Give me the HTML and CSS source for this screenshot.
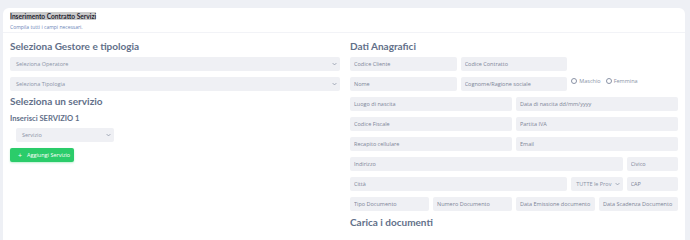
FILE: index.html
```html
<!DOCTYPE html>
<html lang="it">
<head>
<meta charset="utf-8">
<title>Inserimento Contratto Servizi</title>
<link rel="stylesheet" href="styles.css">
</head>
<body>
<div class="card">
  <div class="card-header">
    <div class="title"><span class="title-sel">Inserimento Contratto Servizi</span></div>
    <div class="subtitle">Compila tutti i campi necessari.</div>
  </div>
  <div class="card-body">
    <div class="col-left">
      <h2 class="section">Seleziona Gestore e tipologia</h2>
      <div class="select wide first"><span>Seleziona Operatore</span><svg class="chev" viewBox="0 0 8 5" width="5" height="4"><path d="M1 1l3 3 3-3" fill="none" stroke="#8a93a6" stroke-width="1.2"/></svg></div>
      <div class="select wide"><span>Seleziona Tipologia</span><svg class="chev" viewBox="0 0 8 5" width="5" height="4"><path d="M1 1l3 3 3-3" fill="none" stroke="#8a93a6" stroke-width="1.2"/></svg></div>
      <h2 class="section s2">Seleziona un servizio</h2>
      <h3 class="sub">Inserisci SERVIZIO 1</h3>
      <div class="select small"><span>Servizio</span><svg class="chev" viewBox="0 0 8 5" width="5" height="4"><path d="M1 1l3 3 3-3" fill="none" stroke="#8a93a6" stroke-width="1.2"/></svg></div>
      <button class="btn-add"><span class="plus">+</span>Aggiungi Servizio</button>
    </div>
    <div class="col-right">
      <h2 class="section">Dati Anagrafici</h2>
      <div class="form-grid">
        <input class="c4" placeholder="Codice Cliente">
        <input class="c4" placeholder="Codice Contratto">
        <div class="c4"></div>
        <input class="c4" placeholder="Nome">
        <input class="c4" placeholder="Cognome/Ragione sociale">
        <div class="c4 radios">
          <label class="radio"><span class="dot"></span>Maschio</label>
          <label class="radio"><span class="dot"></span>Femmina</label>
        </div>
        <input class="c6" placeholder="Luogo di nascita">
        <input class="c6" placeholder="Data di nascita dd/mm/yyyy">
        <input class="c6" placeholder="Codice Fiscale">
        <input class="c6" placeholder="Partita IVA">
        <input class="c6" placeholder="Recapito cellulare">
        <input class="c6" placeholder="Email">
        <input class="c10" placeholder="Indirizzo">
        <input class="c2" placeholder="Civico">
        <input class="c8" placeholder="Città">
        <div class="c2 select prov"><span>TUTTE le Prov</span><svg class="chev" viewBox="0 0 8 5" width="5" height="4"><path d="M1 1l3 3 3-3" fill="none" stroke="#8a93a6" stroke-width="1.2"/></svg></div>
        <input class="c2" placeholder="CAP">
        <input class="c3" placeholder="Tipo Documento">
        <input class="c3" placeholder="Numero Documento">
        <input class="c3" placeholder="Data Emissione documento">
        <input class="c3" placeholder="Data Scadenza Documento">
      </div>
      <h2 class="section s3">Carica i documenti</h2>
    </div>
  </div>
</div>
</body>
</html>
```

FILE: styles.css
```css
html, body {
  margin: 0;
  padding: 0;
  height: 100%;
  overflow: hidden;
}
body {
  background: #eef0f5;
  font-family: "Open Sans", "Noto Sans", sans-serif;
}
.card {
  margin: 8px 5px 0 3px;
  background: #ffffff;
  border-radius: 6px 6px 0 0;
  height: calc(100vh - 8px);
}
.card-header {
  height: 25px;
  padding: 4px 7px 0;
  box-sizing: border-box;
  border-bottom: 1px solid #f2f3f7;
}
.title {
  font-family: "Lato", sans-serif;
  font-size: 6.6px;
  line-height: 9px;
  font-weight: 700;
  color: #1f2430;
}
.title-sel {
  background: #c9c9c9;
}
.subtitle {
  font-size: 5px;
  line-height: 7px;
  margin-top: 3px;
  color: #6b86b8;
}
.card-body {
  display: grid;
  grid-template-columns: 330px 328px;
  column-gap: 10px;
  padding: 0 7px;
}
.section {
  margin: 6.5px 0 4.5px;
  font-family: "Lato", sans-serif;
  font-size: 10px;
  line-height: 13px;
  font-weight: 700;
  color: #627089;
}
.section.s2 { margin-top: 3.5px; margin-bottom: 5px; }
.section.s3 { margin-top: 4.8px; }
.sub {
  margin: 0 0 5.8px;
  font-family: "Lato", sans-serif;
  font-size: 7.6px;
  line-height: 10px;
  font-weight: 700;
  color: #627089;
}
.select {
  display: flex;
  align-items: center;
  justify-content: space-between;
  height: 14px;
  box-sizing: border-box;
  padding: 0 3px 0 6px;
  background: #eff0f4;
  border-radius: 2px;
  font-size: 5.5px;
  color: #8a93a6;
}
.select.first { margin-bottom: 6px; }
.select.small {
  width: 98px;
  margin-left: 6px;
  margin-bottom: 6px;
}
.select.prov { padding: 0 3px 0 5px; }
.btn-add {
  display: flex;
  align-items: center;
  height: 14px;
  width: 64px;
  padding: 0 0 0 8px;
  border: 0;
  border-radius: 2px;
  background: #2bcc6a;
  color: #ffffff;
  font-family: inherit;
  font-size: 5.5px;
  box-shadow: 0 1px 2px rgba(43, 204, 106, 0.3);
}
.plus {
  font-size: 7px;
  margin-right: 5px;
}
.form-grid {
  display: grid;
  grid-template-columns: repeat(12, 1fr);
  column-gap: 4px;
  row-gap: 6px;
}
.form-grid input {
  height: 14px;
  box-sizing: border-box;
  border: 0;
  border-radius: 2px;
  background: #eff0f4;
  padding: 0 4px;
  font-family: inherit;
  font-size: 5.5px;
  color: #6a7385;
  min-width: 0;
  width: 100%;
}
.form-grid input::placeholder { color: #7d8597; }
.c2 { grid-column: span 2; }
.c3 { grid-column: span 3; }
.c4 { grid-column: span 4; }
.c6 { grid-column: span 6; }
.c8 { grid-column: span 8; }
.c10 { grid-column: span 10; }
.radios {
  display: flex;
  gap: 5px;
  align-self: start;
  margin-top: 0.5px;
  padding-left: 0;
}
.radio {
  display: flex;
  align-items: center;
  font-size: 5.5px;
  line-height: 7px;
  color: #8a93a6;
}
.dot {
  width: 4px;
  height: 4px;
  border: 0.6px solid #8a93a6;
  border-radius: 50%;
  margin-right: 2px;
}
```
